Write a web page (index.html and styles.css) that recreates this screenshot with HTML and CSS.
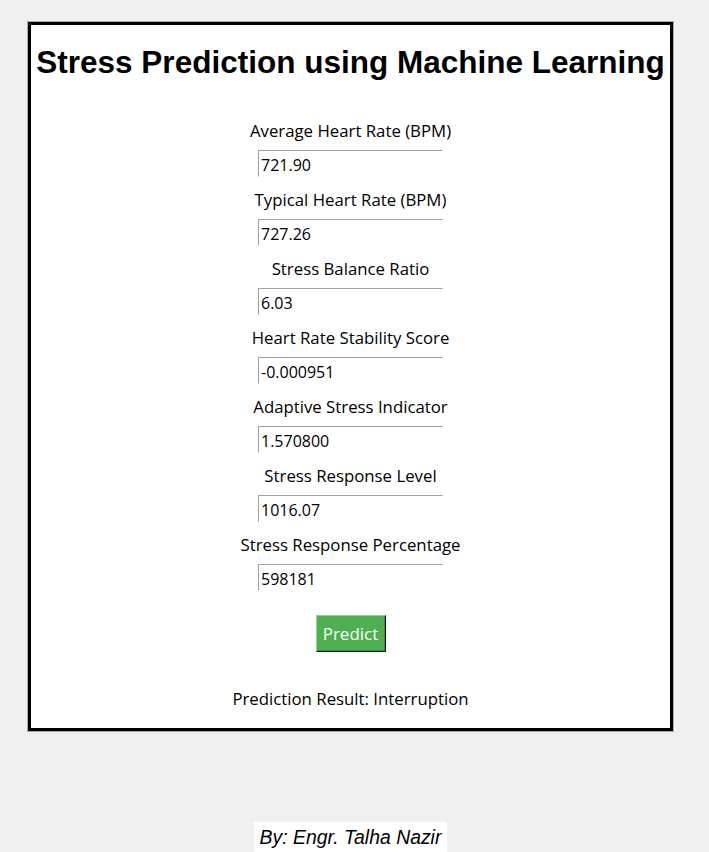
FILE: index.html
```html
<!DOCTYPE html>
<html lang="en">
<head>
<meta charset="utf-8">
<title>Stress Prediction using Machine Learning</title>
<link rel="stylesheet" href="styles.css">
</head>
<body>
<main class="window">
  <section class="panel">
    <h1 class="title">Stress Prediction using Machine Learning</h1>
    <div class="fields">
      <label class="field"><span class="field-label">Average Heart Rate (BPM)</span><input class="field-input" type="text" value="721.90" readonly></label>
      <label class="field"><span class="field-label">Typical Heart Rate (BPM)</span><input class="field-input" type="text" value="727.26" readonly></label>
      <label class="field"><span class="field-label">Stress Balance Ratio</span><input class="field-input" type="text" value="6.03" readonly></label>
      <label class="field"><span class="field-label">Heart Rate Stability Score</span><input class="field-input" type="text" value="-0.000951" readonly></label>
      <label class="field"><span class="field-label">Adaptive Stress Indicator</span><input class="field-input" type="text" value="1.570800" readonly></label>
      <label class="field"><span class="field-label">Stress Response Level</span><input class="field-input" type="text" value="1016.07" readonly></label>
      <label class="field"><span class="field-label">Stress Response Percentage</span><input class="field-input" type="text" value="598181" readonly></label>
    </div>
    <button class="predict-btn" type="button">Predict</button>
    <p class="result">Prediction Result: Interruption</p>
  </section>
  <footer class="credit">By: Engr. Talha Nazir</footer>
</main>
</body>
</html>
```
FILE: styles.css
```css
* {
  box-sizing: border-box;
}

html, body {
  margin: 0;
  padding: 0;
  background: #f0f0f0;
}

body {
  font-family: "Open Sans", "Noto Sans", sans-serif;
  color: #000;
  overflow: hidden;
}

.window {
  width: 645px;
  margin: 22px 0 0 28px;
  display: flex;
  flex-direction: column;
  align-items: center;
}

.panel {
  width: 645px;
  height: 709px;
  background: #fff;
  border: 3px solid #000;
  box-shadow: 0 0 0 1px #a8a8a8;
  display: flex;
  flex-direction: column;
  align-items: center;
  padding-top: 19px;
}

.title {
  margin: 0;
  font-family: "Liberation Sans", Arial, sans-serif;
  font-weight: 700;
  font-size: 31.5px;
  line-height: 36px;
  white-space: nowrap;
}

.fields {
  margin-top: 39px;
  display: flex;
  flex-direction: column;
  align-items: center;
  gap: 11px;
}

.field {
  display: flex;
  flex-direction: column;
  align-items: center;
  gap: 8px;
}

.field-label {
  font-size: 16.8px;
  line-height: 23px;
  white-space: nowrap;
}

.field-input {
  width: 185px;
  height: 27px;
  margin: 0;
  padding: 3px 2px 0;
  border: 1px solid;
  border-color: #a0a0a0 #ffffff #ffffff #a0a0a0;
  background: #fff;
  font-family: "Open Sans", "Noto Sans", sans-serif;
  font-size: 16px;
  color: #000;
  outline: none;
}

.predict-btn {
  margin-top: 24px;
  width: 70px;
  height: 37px;
  padding: 0;
  border: 1px solid;
  border-color: #8fd392 #1b1b1b #1b1b1b #8fd392;
  box-shadow: inset -1px -1px 0 #3e8e41;
  background: #4caf50;
  color: #fff;
  font-family: "Open Sans", "Noto Sans", sans-serif;
  font-size: 17px;
  line-height: 33px;
}

.result {
  margin: 35px 0 0;
  font-size: 16.8px;
  line-height: 23px;
  white-space: nowrap;
}

.credit {
  margin-top: 91px;
  padding: 4px 6px 8px;
  background: #fff;
  font-family: "Liberation Sans", Arial, sans-serif;
  font-style: italic;
  font-size: 19.4px;
  line-height: 22px;
  white-space: nowrap;
}
```
